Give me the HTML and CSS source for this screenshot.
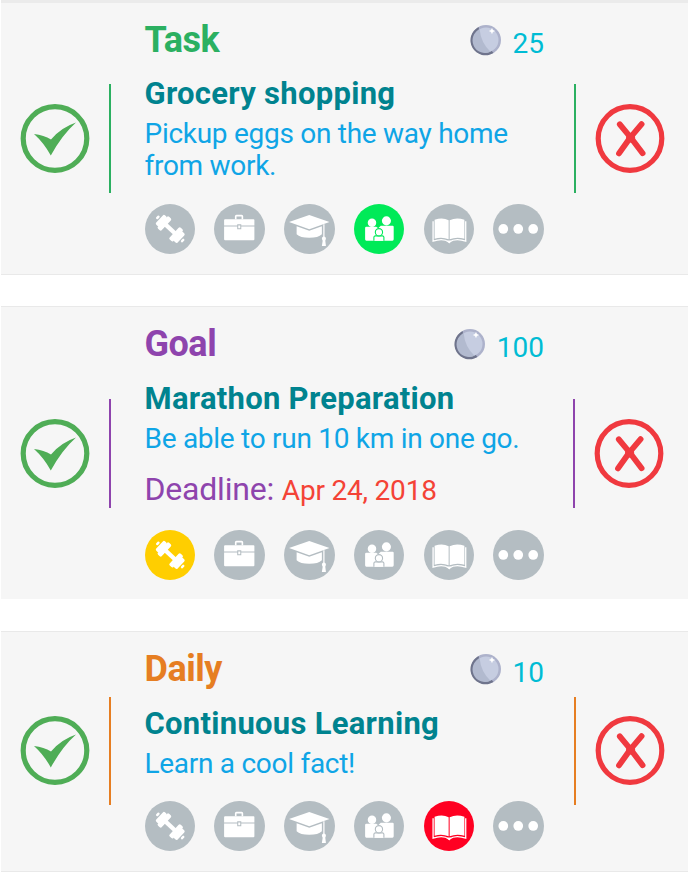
FILE: index.html
```
<!DOCTYPE html>
<html lang="en">
<head>
<meta charset="utf-8">
<title>Tasks</title>
<link rel="stylesheet" href="styles.css">
</head>
<body>
<svg class="defs" aria-hidden="true">
  <symbol id="check" viewBox="0 0 70 70"><circle cx="35" cy="34.5" r="31.8" fill="none" stroke="#4fad56" stroke-width="5.2"/><path d="M14 30Q24 31 31 35.5Q41 23.5 56 18.5Q42 31 30.8 51.5Q24 39 14 30Z" fill="#4fad56"/></symbol>
  <symbol id="cross" viewBox="0 0 70 70"><circle cx="35" cy="34.5" r="31.8" fill="none" stroke="#f0393f" stroke-width="5.2"/><path d="M24.8 20.3L35.5 33.3L46.6 20.1M35.5 33.3L24 49.4M35.5 33.3L47.6 49.2" fill="none" stroke="#f0393f" stroke-width="5.8" stroke-linecap="round"/><circle cx="35.6" cy="34" r="4.6" fill="#f0393f"/></symbol>
  <symbol id="coin" viewBox="0 0 32 32"><circle cx="16" cy="16" r="15" fill="#adb2cb"/><path d="M8.6 3A15 15 0 1 0 23.5 29L21 26L9 5Z" fill="#6f748c"/><circle cx="16" cy="16" r="12.5" fill="#c6cde1"/><path d="M9.6 5.2A12.5 12.5 0 0 0 20.5 27.7Q11 19 9.6 5.2Z" fill="#b2bacf"/><path d="M22 3.8L22.9 6L25.2 7L22.9 8L22 10.3L21 8L18.8 7L21 6Z" fill="#fff"/></symbol>
  <symbol id="fitness" viewBox="0 0 50 50"><g transform="translate(25 24.7) rotate(43)" fill="#fff"><rect x="-7" y="-2.1" width="14" height="4.2"/><rect x="-10.5" y="-8" width="5.2" height="16" rx="1.5"/><rect x="-14.5" y="-6.3" width="4.8" height="12.6" rx="1.5"/><rect x="-18" y="-2" width="2.4" height="4" rx="1"/><rect x="5.3" y="-8" width="5.2" height="16" rx="1.5"/><rect x="9.7" y="-6.3" width="4.8" height="12.6" rx="1.5"/><rect x="15.6" y="-2" width="2.4" height="4" rx="1"/></g></symbol>
  <symbol id="work" viewBox="0 0 50 50"><path d="M21.5 15V12.2Q21.5 11.5 22.2 11.5H27.4Q28.1 11.5 28.1 12.2V15" fill="none" stroke="#fff" stroke-width="1.6"/><path d="M11 15H39.2Q40 15 40 15.8V21.3H27V20H23V21.3H10V15.8Q10 15 11 15ZM10 22.3H23V25H27V22.3H40V35Q40 36 39 36H11Q10 36 10 35Z" fill="#fff"/><path d="M24 21.2H26V24H24Z" fill="#fff"/></symbol>
  <symbol id="study" viewBox="0 0 50 50"><path d="M5 17.7L25 11L45 17.7L25 25Z" fill="#fff"/><path d="M12.5 22L25 26.5L37.5 22V30Q34 33.5 25 33.5Q16 33.5 12.5 30Z" fill="#fff"/><path d="M39.5 20V34" fill="none" stroke="#fff" stroke-width="1.2"/><circle cx="39.5" cy="34.3" r="2" fill="#fff"/><path d="M38.5 35H40.7L41.5 41.5H37.5Z" fill="#fff"/></symbol>
  <symbol id="family" viewBox="0 0 50 50"><circle cx="17.8" cy="18.6" r="4.2" fill="#fff"/><circle cx="32.1" cy="16.7" r="4.5" fill="#fff"/><path d="M12.2 22.5H22L24 24L26.5 21.5H38.2Q39.3 21.5 39.3 22.6V35Q39.3 36.3 38 36.3H12.2Q11 36.3 11 35V23.7Q11 22.5 12.2 22.5Z" fill="#fff"/><path d="M19.7 36.5V33Q19.7 31.8 21 31.6H28.3Q29.6 31.8 29.6 33V36.5" fill="#fff" stroke="currentColor" stroke-width="1.1"/><circle cx="24.7" cy="28" r="3.6" fill="#fff" stroke="currentColor" stroke-width="1.1"/></symbol>
  <symbol id="book" viewBox="0 0 50 50"><path d="M10.5 15.7Q18.5 12.8 24.4 16.2V35Q18 32 10.5 34.3ZM25.4 16.2Q32 12.8 40 15.7V34.3Q32 32 25.4 35Z" fill="#fff"/><path d="M9 17V36.8Q19 33.2 24.9 37.8Q31 33.2 41.3 36.8V17" fill="none" stroke="#fff" stroke-width="1.3"/><path d="M22.7 36.2H27.5L25 39Z" fill="#fff"/></symbol>
  <symbol id="more" viewBox="0 0 50 50"><g fill="#fff"><circle cx="10.2" cy="24.7" r="4.8"/><circle cx="25" cy="24.7" r="4.8"/><circle cx="39.8" cy="24.7" r="4.8"/></g></symbol>
</svg>
<main class="list">
  <article class="card task">
    <div class="side"><svg class="action"><use href="#check"/></svg></div>
    <div class="content">
      <header class="head"><h2 class="type">Task</h2><div class="reward"><svg class="coin"><use href="#coin"/></svg><span>25</span></div></header>
      <h3 class="name">Grocery shopping</h3>
      <p class="desc">Pickup eggs on the way home from work.</p>
      <div class="tags">
        <svg class="tag"><use href="#fitness"/></svg><svg class="tag"><use href="#work"/></svg><svg class="tag"><use href="#study"/></svg><svg class="tag green"><use href="#family"/></svg><svg class="tag"><use href="#book"/></svg><svg class="tag"><use href="#more"/></svg>
      </div>
    </div>
    <div class="side right"><svg class="action"><use href="#cross"/></svg></div>
  </article>
  <article class="card goal">
    <div class="side"><svg class="action"><use href="#check"/></svg></div>
    <div class="content">
      <header class="head"><h2 class="type">Goal</h2><div class="reward"><svg class="coin"><use href="#coin"/></svg><span>100</span></div></header>
      <h3 class="name">Marathon Preparation</h3>
      <p class="desc">Be able to run 10 km in one go.</p>
      <p class="deadline">Deadline: <span class="date">Apr 24, 2018</span></p>
      <div class="tags">
        <svg class="tag yellow"><use href="#fitness"/></svg><svg class="tag"><use href="#work"/></svg><svg class="tag"><use href="#study"/></svg><svg class="tag"><use href="#family"/></svg><svg class="tag"><use href="#book"/></svg><svg class="tag"><use href="#more"/></svg>
      </div>
    </div>
    <div class="side right"><svg class="action"><use href="#cross"/></svg></div>
  </article>
  <article class="card daily">
    <div class="side"><svg class="action"><use href="#check"/></svg></div>
    <div class="content">
      <header class="head"><h2 class="type">Daily</h2><div class="reward"><svg class="coin"><use href="#coin"/></svg><span>10</span></div></header>
      <h3 class="name">Continuous Learning</h3>
      <p class="desc">Learn a cool fact!</p>
      <div class="tags">
        <svg class="tag"><use href="#fitness"/></svg><svg class="tag"><use href="#work"/></svg><svg class="tag"><use href="#study"/></svg><svg class="tag"><use href="#family"/></svg><svg class="tag red"><use href="#book"/></svg><svg class="tag"><use href="#more"/></svg>
      </div>
    </div>
    <div class="side right"><svg class="action"><use href="#cross"/></svg></div>
  </article>
</main>
</body>
</html>
```
FILE: styles.css
```
* { box-sizing: border-box; }
body { margin: 0; background: #fff; font-family: Roboto, "Liberation Sans", sans-serif; overflow: hidden; }
h2, h3, p { margin: 0; }
.defs { display: none; }
.list { display: flex; flex-direction: column; height: 872px; }
.card {
  display: grid;
  grid-template-columns: 110px 400px 1fr;
  column-gap: 34px;
  flex: none;
  margin-left: 1px;
  background: #f6f6f6;
  border-top: 1px solid #e9e9e9;
  border-bottom: 1px solid #e9e9e9;
}
.task { --accent: #2bb061; height: 275px; border-top: 3px solid #ebebeb; margin-bottom: 31px; }
.goal { --accent: #8e44ad; height: 293px; border-bottom: 0; margin-bottom: 32px; }
.daily { --accent: #e67e22; height: 241px; }

.side {
  display: flex;
  align-items: center;
  height: 109px;
  margin-top: 81px;
  padding-left: 18.5px;
  border-right: 2px solid var(--accent);
}
.goal .side { margin-top: 92px; }
.daily .side { margin-top: 65px; height: 108px; }
.side.right {
  width: 110px;
  margin-left: -5px;
  padding-left: 18.5px;
  border-right: 0;
  border-left: 2px solid var(--accent);
}
.goal .side.right { margin-left: -6px; }
.action { width: 70px; height: 70px; }

.content { padding-top: 17px; margin-left: -0.5px; width: 399.5px; }
.head { display: flex; justify-content: space-between; height: 40px; margin-bottom: 16px; }
.type { font-size: 36px; line-height: 40px; font-weight: 700; letter-spacing: -0.5px; color: var(--accent); }
.reward { display: flex; gap: 11px; color: #00bcd4; font-size: 28px; line-height: 48px; }
.coin { width: 32px; height: 32px; margin-top: 4px; }
.name { font-size: 31px; line-height: 36px; font-weight: 700; letter-spacing: 0.28px; color: #00838f; }
.desc { margin-top: 6px; font-size: 28px; line-height: 32px; letter-spacing: -0.28px; color: #0fa5e6; }
.deadline { margin-top: 16px; font-size: 32px; line-height: 36px; letter-spacing: -0.2px; color: #8e44ad; }
.date { font-size: 28px; color: #f44336; }
.goal .name, .daily .name { padding-top: 1px; }
.tags { display: flex; justify-content: space-between; margin-top: 21.5px; }
.goal .tags, .daily .tags { margin-top: 20.5px; }
.tag { width: 50.5px; height: 50.5px; border-radius: 50%; background: #b4bdc2; color: #b4bdc2; }
.green { background: #00ea58; color: #00ea58; }
.yellow { background: #ffce00; color: #ffce00; }
.red { background: #ff0022; color: #ff0022; }
```
